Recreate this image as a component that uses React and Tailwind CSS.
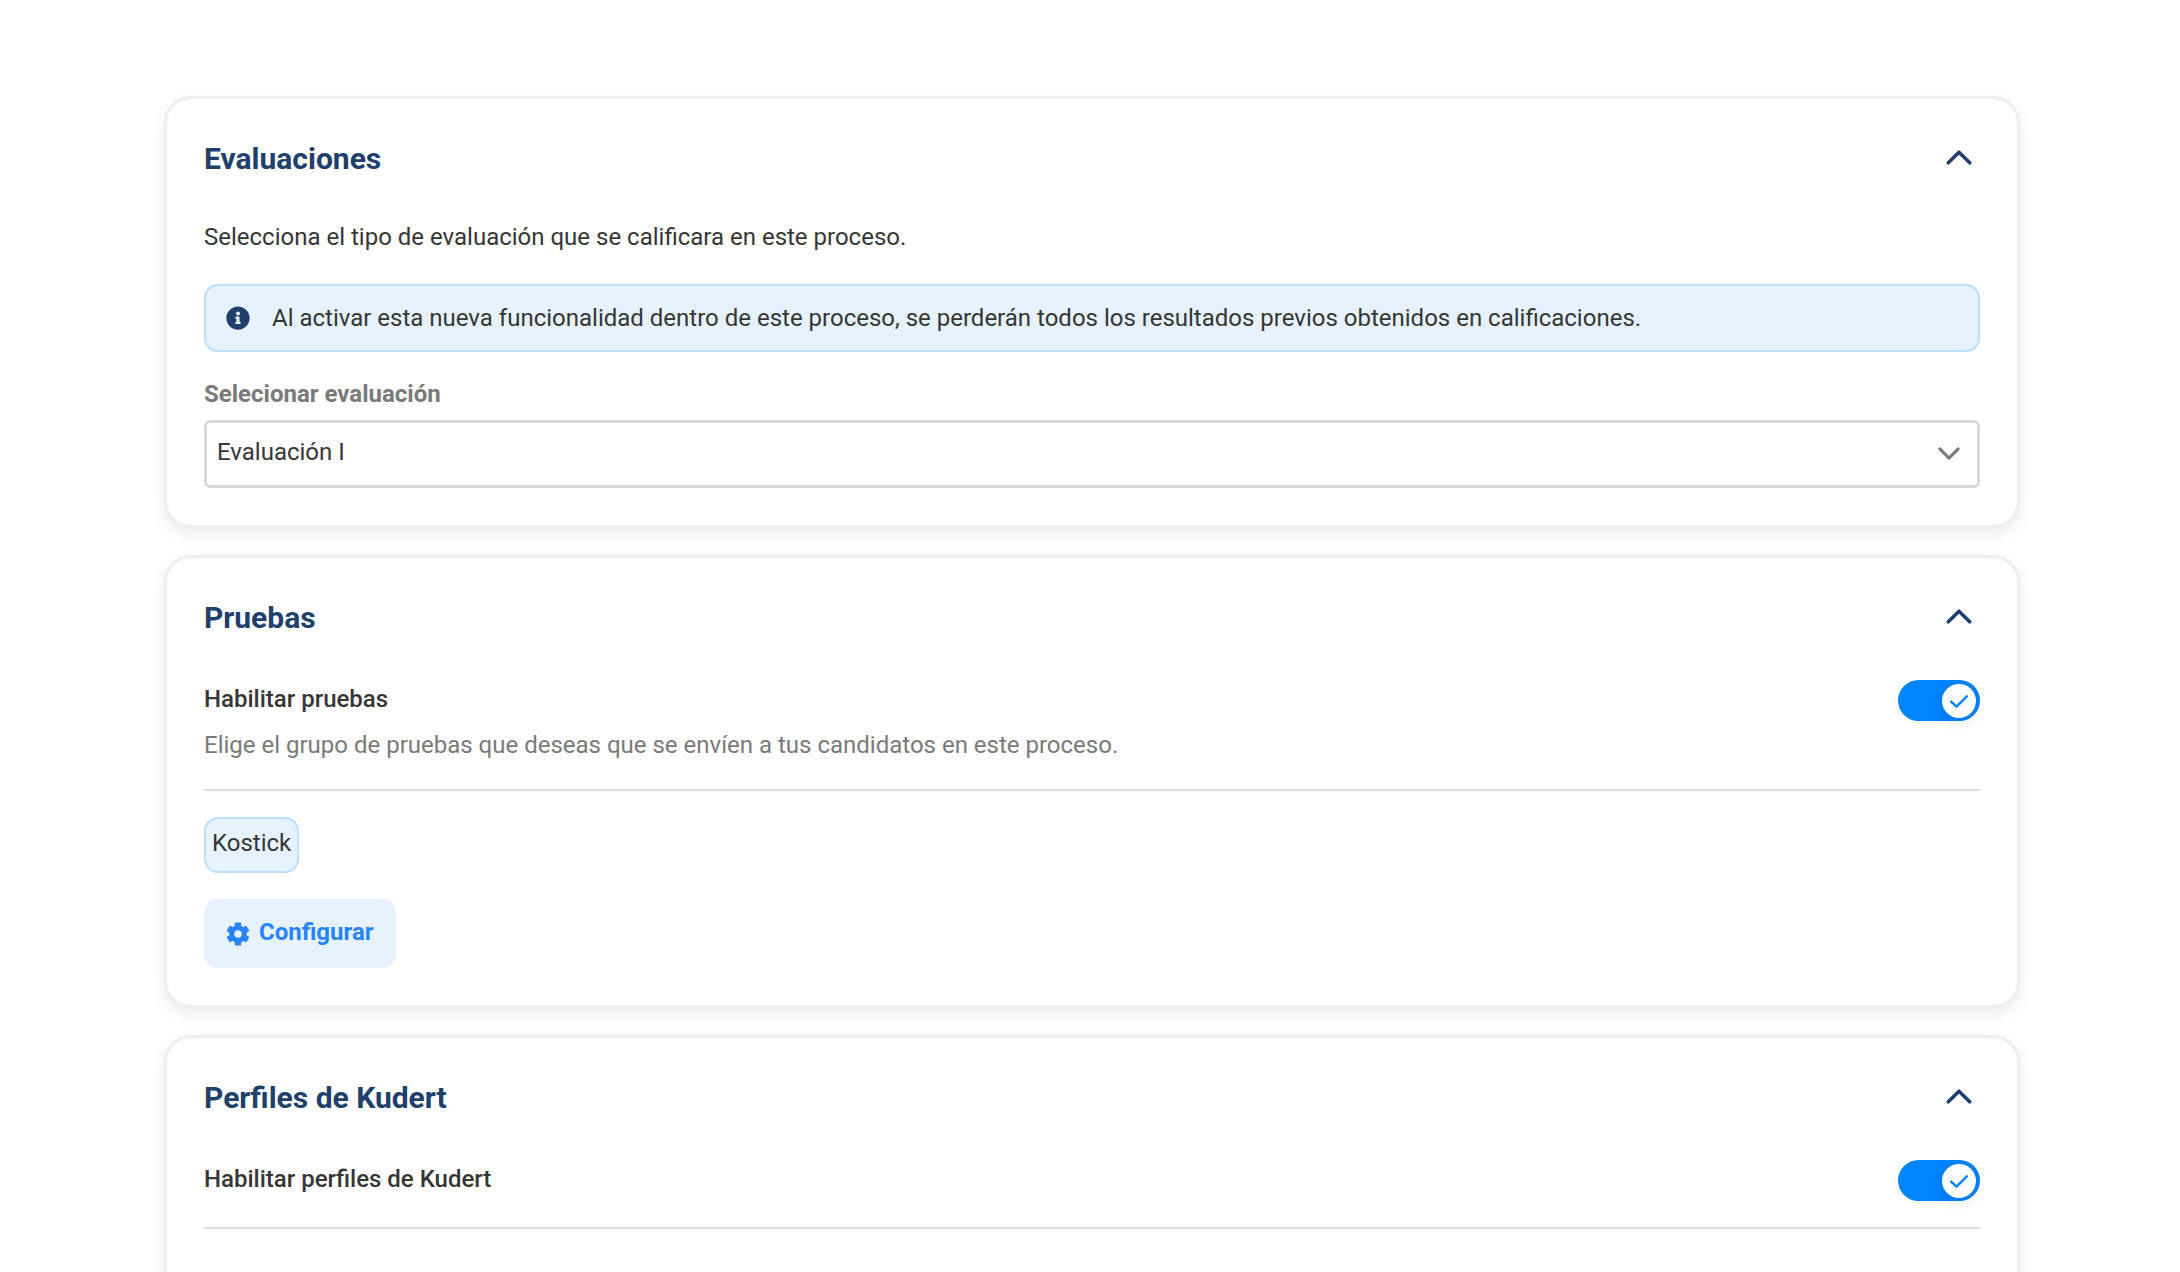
import React, { useState } from 'react';
import { FaInfoCircle } from 'react-icons/fa';

const Chevron = ({ className }) => (
  <svg viewBox="0 0 24 14" fill="none" stroke="currentColor" strokeLinecap="round" strokeLinejoin="round" className={className}>
    <path d="M2 12 L12 2 L22 12" strokeWidth="3.3" />
  </svg>
);

const GearIcon = ({ className }) => (
  <svg viewBox="0 0 24 24" fill="none" stroke="currentColor" className={className}>
    <circle cx="12" cy="12" r="6.3" strokeWidth="5" />
    {/* three bars give the six teeth */}
    <path
      d="M9.8 1.6h4.4v3h-4.4z M9.8 19.4h4.4v3h-4.4z"
      fill="currentColor"
      strokeWidth="2"
      strokeLinejoin="round"
    />
    <path
      d="M9.8 1.6h4.4v3h-4.4z M9.8 19.4h4.4v3h-4.4z"
      transform="rotate(60 12 12)"
      fill="currentColor"
      strokeWidth="2"
      strokeLinejoin="round"
    />
    <path
      d="M9.8 1.6h4.4v3h-4.4z M9.8 19.4h4.4v3h-4.4z"
      transform="rotate(120 12 12)"
      fill="currentColor"
      strokeWidth="2"
      strokeLinejoin="round"
    />
  </svg>
);

const Card = ({ title, children }) => {
  const [open, setOpen] = useState(true);

  return (
    <section className="shrink-0 rounded-[27px] border-[3px] border-[#efefef] bg-white p-[37px] shadow-[0_6px_16px_rgba(0,0,0,0.08)]">
      <div className="flex h-11 items-start justify-between pr-2">
        <h2 className="text-[30px] leading-[46px] font-bold text-[#203f6b]">{title}</h2>
        <button
          type="button"
          aria-label={title}
          aria-expanded={open}
          onClick={() => setOpen(!open)}
          className="flex h-[42px] items-center text-[#203f6b]"
        >
          <Chevron className={open ? 'h-[15px] w-[26px]' : 'h-[15px] w-[26px] rotate-180'} />
        </button>
      </div>
      {open && children}
    </section>
  );
};

const Toggle = ({ id, checked, onChange }) => (
  <span className="relative flex h-[41px] w-[82px] shrink-0">
    <input
      id={id}
      type="checkbox"
      role="switch"
      checked={checked}
      onChange={(e) => onChange(e.target.checked)}
      className="peer h-full w-full cursor-pointer appearance-none rounded-full bg-[#c4c4c4] checked:bg-[#0084ff]"
    />
    <span className="pointer-events-none absolute top-1 left-1 flex size-[34px] items-center justify-center rounded-full bg-white text-[#0084ff] shadow-[0_4px_14px_rgba(0,0,0,0.1)] peer-checked:right-1 peer-checked:left-auto">
      {checked && (
        <svg viewBox="0 0 18 13" fill="none" stroke="currentColor" strokeWidth="2.4" strokeLinecap="round" strokeLinejoin="round" className="h-[13px] w-[18px]">
          <path d="M1.2 6.6 L6.5 11.6 L16.8 1.3" />
        </svg>
      )}
    </span>
  </span>
);

const ToggleRow = ({ id, label, description }) => {
  const [checked, setChecked] = useState(true);

  return (
    <div className="mt-[41px] flex items-start justify-between border-b-2 border-[#dcdcdc] pb-[26px]">
      <div>
        <label htmlFor={id} className="block leading-[38px] font-medium">{label}</label>
        {description && <p className="mt-[9px] text-[#7a7a7a]">{description}</p>}
      </div>
      <Toggle id={id} checked={checked} onChange={setChecked} />
    </div>
  );
};

const App = () => {
  const [evaluation, setEvaluation] = useState('1');

  return (
    <main className="flex h-screen flex-col gap-[27px] overflow-hidden bg-white pt-24 pr-[160px] pl-[164px] font-[Roboto,sans-serif] text-[24px] leading-9 text-[#363636]">
      <Card title="Evaluaciones">
        <p className="mt-[39px]">Selecciona el tipo de evaluación que se calificara en este proceso.</p>
        <div className="mt-[29px] flex h-[68px] items-center gap-[22px] rounded-[14px] border-2 border-[#bcdfff] bg-[#e6f2ff] px-5">
          <FaInfoCircle className="size-6 shrink-0 text-[#203f6b]" />
          <p>Al activar esta nueva funcionalidad dentro de este proceso, se perderán todos los resultados previos obtenidos en calificaciones.</p>
        </div>
        <label htmlFor="evaluation" className="mt-6 block font-bold text-[#7a7a7a]">Selecionar evaluación</label>
        <div className="relative mt-2">
          <select
            id="evaluation"
            value={evaluation}
            onChange={(e) => setEvaluation(e.target.value)}
            className="block h-[68px] w-full appearance-none rounded-[6px] border-[3px] border-[#d9d9d9] bg-white px-[10px] pb-1"
          >
            <option value="1">Evaluación I</option>
            <option value="2">Evaluación II</option>
          </select>
          <Chevron className="pointer-events-none absolute top-[27px] right-5 h-[13px] w-[22px] rotate-180 text-[#7a7a7a]" />
        </div>
      </Card>

      <Card title="Pruebas">
        <ToggleRow
          id="tests"
          label="Habilitar pruebas"
          description="Elige el grupo de pruebas que deseas que se envíen a tus candidatos en este proceso."
        />
        <div className="mt-[26px] flex flex-col items-start gap-[26px]">
          <span className="flex h-14 items-center rounded-[14px] border-2 border-[#bcdfff] bg-[#e6f2ff] px-[6px] pb-1">Kostick</span>
          <button type="button" className="flex h-[69px] items-center gap-[9px] rounded-[14px] bg-[#e6f2ff] px-[22px] font-bold text-[#2684ff]">
            <GearIcon className="size-6" />
            <span className="pb-1">Configurar</span>
          </button>
        </div>
      </Card>

      <Card title="Perfiles de Kudert">
        <ToggleRow id="profiles" label="Habilitar perfiles de Kudert" />
        <div className="h-20" />
      </Card>
    </main>
  );
};

export default App;
